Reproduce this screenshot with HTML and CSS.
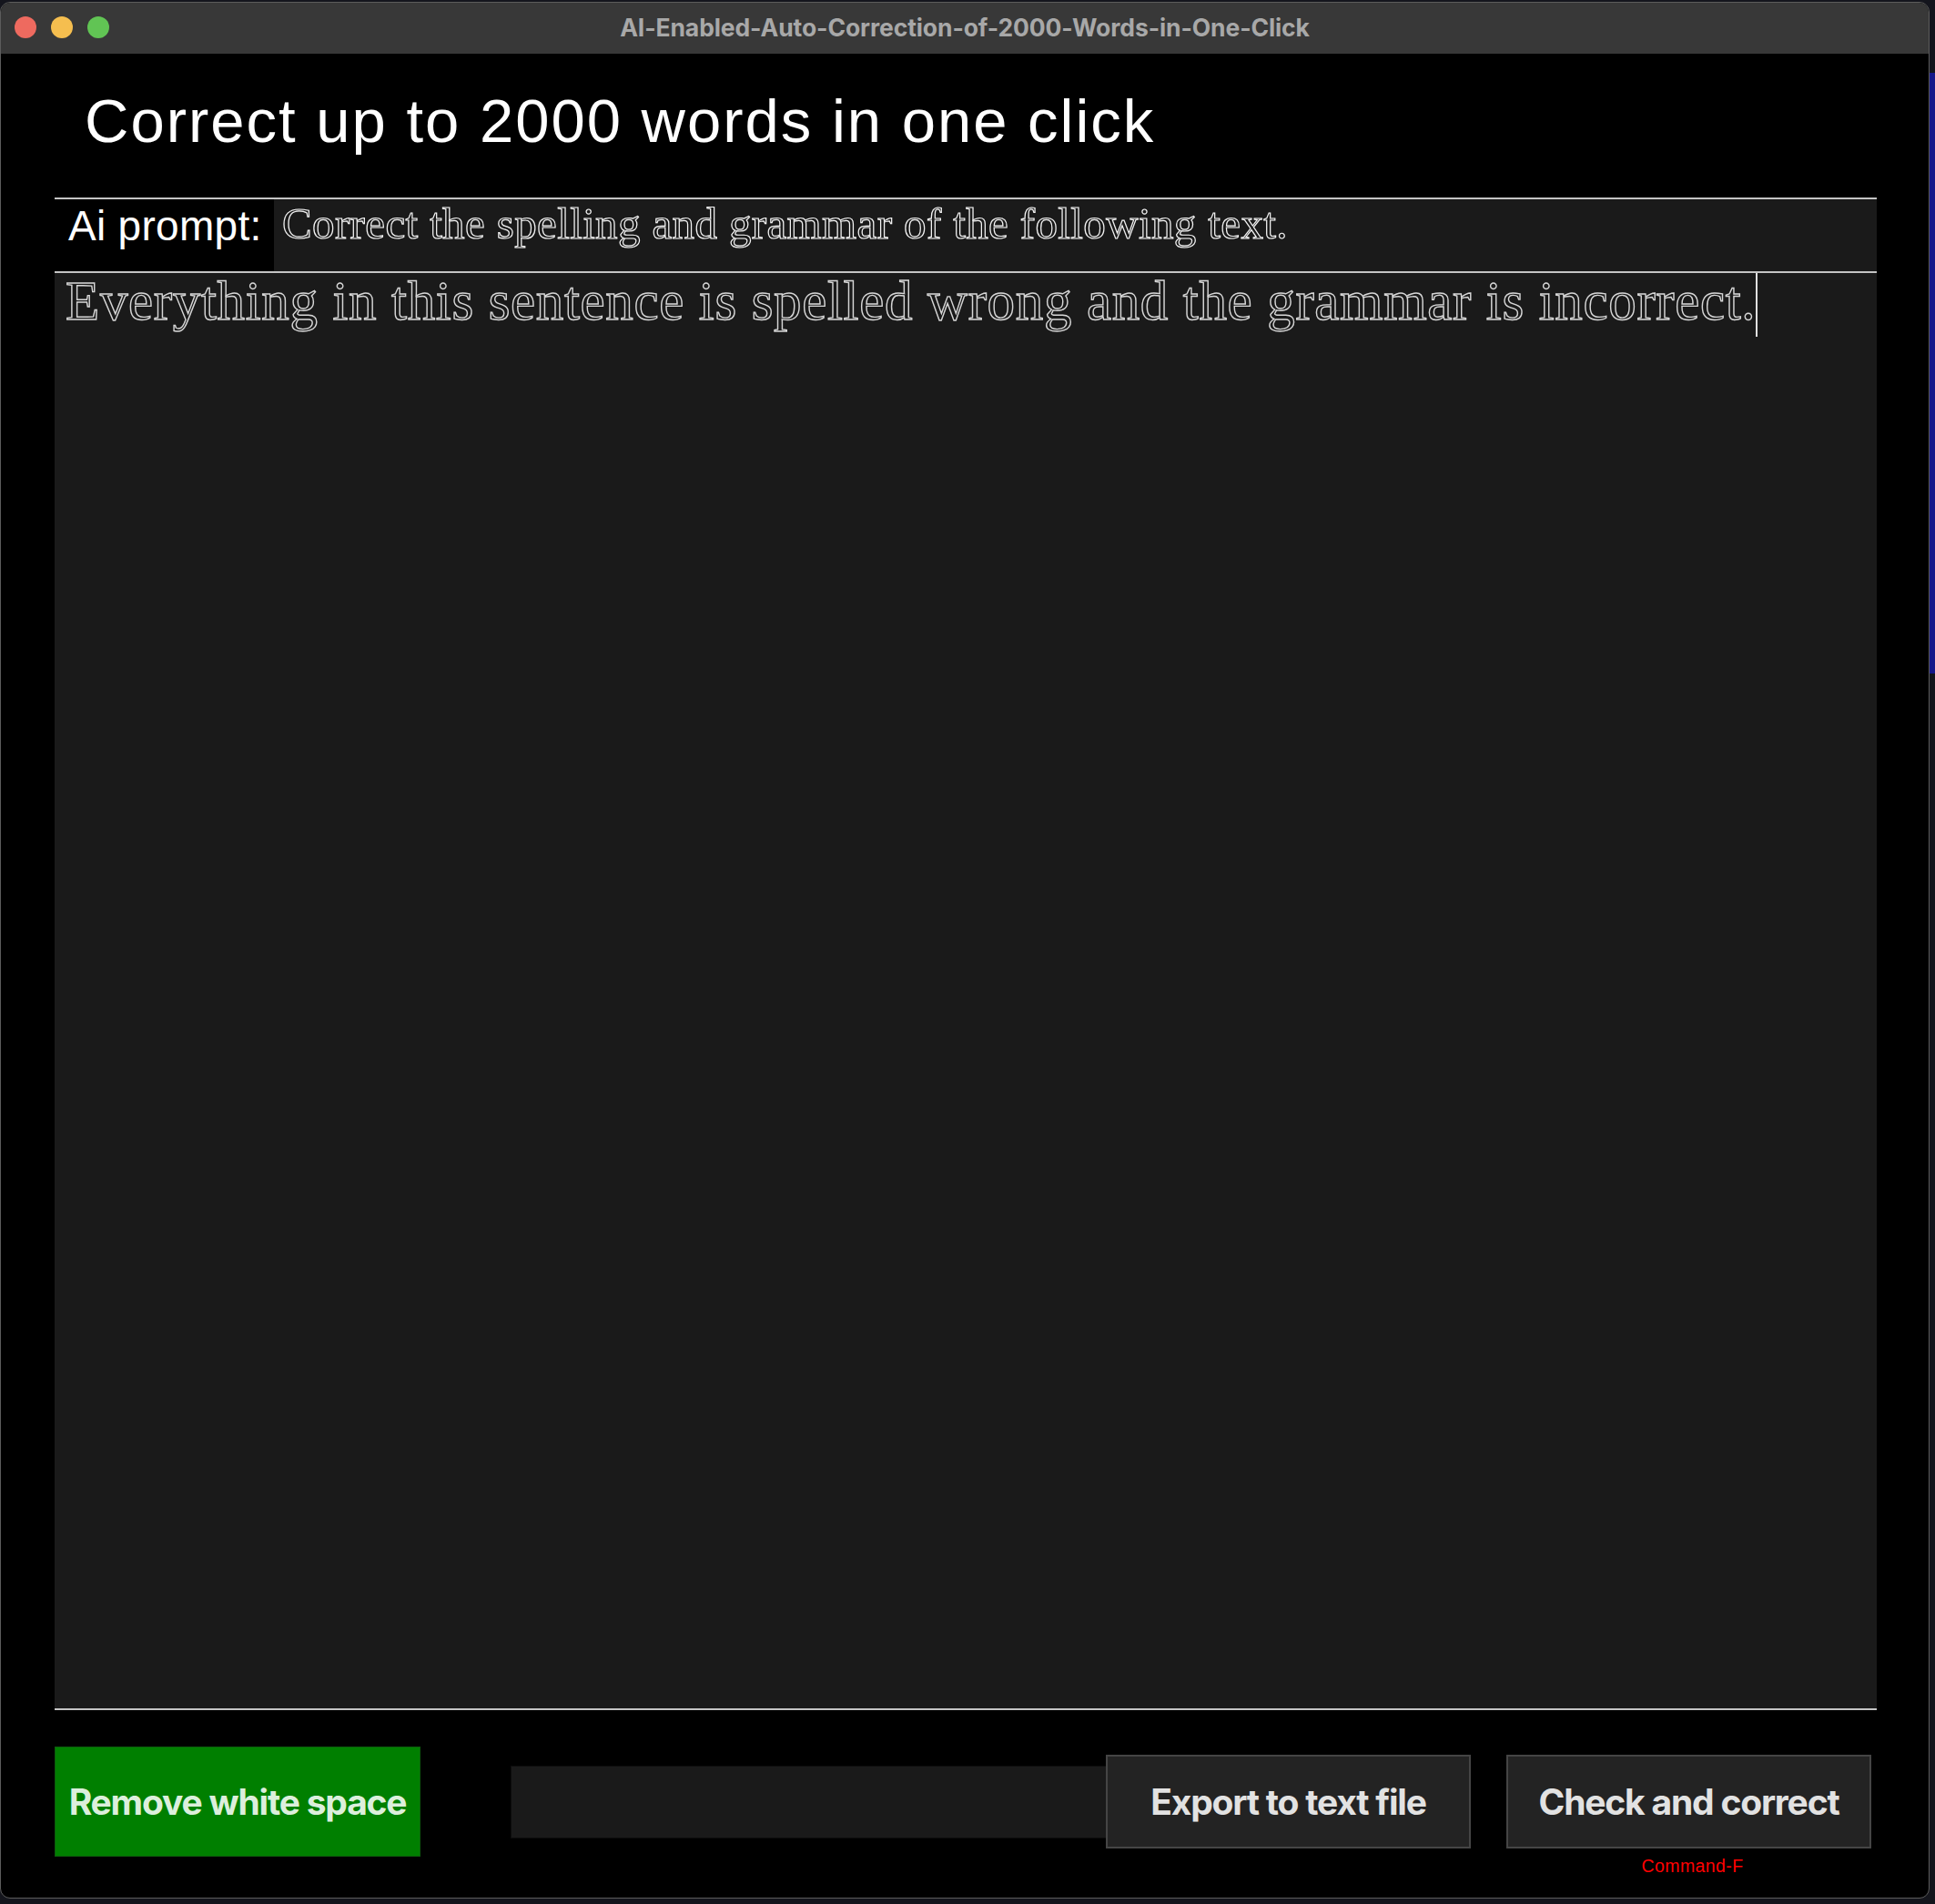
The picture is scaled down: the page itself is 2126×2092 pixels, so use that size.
FILE: index.html
```html
<!DOCTYPE html>
<html lang="en">
<head>
<meta charset="utf-8">
<title>AI-Enabled-Auto-Correction-of-2000-Words-in-One-Click</title>
<link rel="stylesheet" href="styles.css">
</head>
<body>
<div class="window">
  <div class="titlebar">
    <div class="lights">
      <span class="light red"></span>
      <span class="light yellow"></span>
      <span class="light green"></span>
    </div>
    <div class="title">AI-Enabled-Auto-Correction-of-2000-Words-in-One-Click</div>
  </div>
  <div class="content">
    <h1 class="heading">Correct up to 2000 words in one click</h1>
    <div class="prompt-row">
      <div class="prompt-label">Ai prompt:</div>
      <div class="prompt-input">Correct the spelling and grammar of the following text.</div>
    </div>
    <div class="editor"><span class="editor-text">Everything in this sentence is spelled wrong and the grammar is incorrect.</span><span class="caret"></span></div>
    <div class="actions">
      <button class="btn btn-green">Remove white space</button>
      <div class="field"></div>
      <button class="btn btn-dark btn-export">Export to text file</button>
      <div class="check-wrap">
        <button class="btn btn-dark">Check and correct</button>
        <div class="shortcut">Command-F</div>
      </div>
    </div>
  </div>
</div>
</body>
</html>
```
FILE: styles.css
```css
* { box-sizing: border-box; }
html, body { margin: 0; padding: 0; }
body {
  width: 2126px;
  height: 2092px;
  overflow: hidden;
  background: linear-gradient(to bottom, #14151d 0, #14151d 80px, #17188a 80px, #17188a 740px, #14151c 740px);
  padding-top: 2px;
}
.window {
  width: 2120px;
  height: 2084px;
  border: 1px solid #5c5c5c;
  border-radius: 11px;
  background: #000;
  overflow: hidden;
  display: flex;
  flex-direction: column;
}
.titlebar {
  height: 56px;
  background: #383838;
  display: flex;
  align-items: center;
  position: relative;
  flex: none;
}
.lights {
  display: flex;
  gap: 16px;
  padding-left: 15px;
  position: absolute;
  left: 0;
  top: 15px;
}
.light {
  width: 24px;
  height: 24px;
  border-radius: 50%;
  display: block;
}
.red { background: #ee6a5f; }
.yellow { background: #f5be4f; }
.green { background: #61c454; }
.title {
  flex: 1;
  text-align: center;
  font-family: Inter, "Noto Sans", sans-serif;
  font-weight: 700;
  font-size: 26.5px;
  color: #a8a8a8;
  letter-spacing: -0.1px;
  margin-top: -2px;
}
.content {
  flex: 1;
  padding: 0 57px 0 59px;
  display: flex;
  flex-direction: column;
}
.heading {
  margin: 40px 0 0 33px;
  font-family: "Liberation Sans", Arial, sans-serif;
  font-weight: 400;
  font-size: 67px;
  line-height: 67px;
  letter-spacing: 2px;
  color: #fff;
}
.prompt-row {
  margin-top: 51px;
  border-top: 2px solid #c4c4c4;
  height: 81px;
  display: flex;
}
.prompt-label {
  width: 241px;
  background: #000;
  padding: 6px 0 0 15px;
  font-family: "Liberation Sans", Arial, sans-serif;
  font-size: 46px;
  line-height: 46px;
  letter-spacing: 0.3px;
  color: #fff;
}
.prompt-input {
  flex: 1;
  background: #1a1a1a;
  padding: 3px 0 0 9px;
  font-family: "Liberation Serif", "Times New Roman", serif;
  font-size: 49px;
  line-height: 48px;
  letter-spacing: 0.37px;
  color: #1a1a1a;
  -webkit-text-stroke: 1.2px #f4f4f4;
}
.editor {
  height: 1581px;
  background: #1a1a1a;
  border-top: 2px solid #c4c4c4;
  border-bottom: 2px solid #c4c4c4;
  padding: 0 0 0 12px;
  font-family: "Liberation Serif", "Times New Roman", serif;
  font-size: 61px;
  line-height: 60px;
  letter-spacing: 0.65px;
  color: #1a1a1a;
  -webkit-text-stroke: 1.4px #d6d6d6;
}
.caret {
  display: inline-block;
  width: 2px;
  height: 70px;
  background: #e0e0e0;
  vertical-align: -19px;
  margin-left: 0;
}
.actions {
  margin-top: 40px;
  display: flex;
  align-items: center;
}
.btn {
  font-family: Inter, "Noto Sans", sans-serif;
  font-weight: 700;
  font-size: 39px;
  letter-spacing: -1.2px;
  cursor: pointer;
  padding: 0;
}
.btn-green {
  width: 402px;
  height: 121px;
  background: #007f00;
  border: 1px solid #0d5c0d;
  color: #dcefdc;
}
.field {
  margin-left: 99px;
  width: 660px;
  height: 80px;
  background: #1a1a1a;
  border: 1px solid #0d0d0d;
}
.btn-dark {
  width: 401px;
  height: 103px;
  background: #232323;
  border: 2px solid #454545;
  color: #e2e2e2;
}
.btn-export {
  margin-left: -6px;
  position: relative;
}
.check-wrap {
  margin-left: 39px;
  position: relative;
  display: flex;
}
.shortcut {
  position: absolute;
  left: 0;
  right: 0;
  top: 111px;
  text-align: center;
  font-family: "Liberation Sans", Arial, sans-serif;
  font-size: 19.5px;
  letter-spacing: 0.4px;
  color: #ff0000;
  padding-left: 8px;
}
```
